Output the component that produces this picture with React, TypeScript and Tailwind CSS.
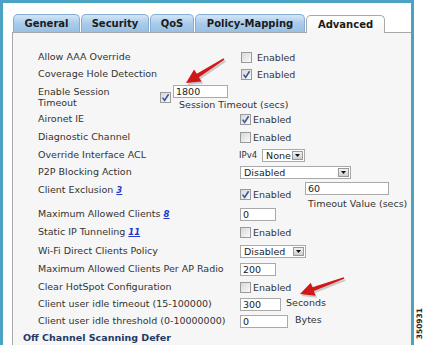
import React from "react";

const font = "font-['DejaVu_Sans',Verdana,sans-serif]";

function Check({ checked }: { checked?: boolean }) {
  return (
    <span className="inline-flex w-[11px] h-[11px] shrink-0 items-center justify-center border border-[#9a9a9a] bg-gradient-to-br from-[#d8d8d8] to-[#fafafa]">
      {checked && (
        <svg width="9" height="9" viewBox="0 0 9 9">
          <path d="M1.6 4.6 L3.6 7.4 L7.6 1.2" fill="none" stroke="#3556a0" strokeWidth="1.6" />
        </svg>
      )}
    </span>
  );
}

function Enabled({ checked, gap = "ml-[2px]" }: { checked?: boolean; gap?: string }) {
  return (
    <span className="flex items-center">
      <Check checked={checked} />
      <span className={`${gap} leading-[11px]`}>Enabled</span>
    </span>
  );
}

function Field({ value, w }: { value: string; w: string }) {
  return (
    <div className={`${w} h-[13px] shrink-0 border border-[#a9a9a9] bg-white pl-[2px] text-[9.5px] leading-[11px] text-[#222]`}>
      {value}
    </div>
  );
}

function Select({ value, w }: { value: string; w: string }) {
  return (
    <div className={`${w} h-[13px] shrink-0 flex items-center justify-between border border-[#a9a9a9] bg-white pl-[3px] pr-[1px] text-[9.5px] leading-[11px] text-[#222]`}>
      <span>{value}</span>
      <span className="flex w-[11px] h-[9px] items-center justify-center border border-[#9a9a9a] bg-gradient-to-b from-[#f2f2f2] to-[#cfcfcf]">
        <svg width="5" height="3" viewBox="0 0 5 3">
          <path d="M0 0 H5 L2.5 3 Z" fill="#111" />
        </svg>
      </span>
    </div>
  );
}

function Ref({ n }: { n: string }) {
  return <span className="ml-[3px] text-[8.5px] font-bold italic underline text-[#2438c8]">{n}</span>;
}

function Row({ label, h, children }: { label: React.ReactNode; h: string; children?: React.ReactNode }) {
  return (
    <div className={`flex items-center ${h}`}>
      <div className="w-[202px] shrink-0">{label}</div>
      <div className="flex items-center">{children}</div>
    </div>
  );
}

function Arrow({ x1, y1, x2, y2 }: { x1: number; y1: number; x2: number; y2: number }) {
  const dx = x2 - x1;
  const dy = y2 - y1;
  const len = Math.hypot(dx, dy);
  const ux = dx / len;
  const uy = dy / len;
  const nx = -uy;
  const ny = ux;
  const head = 14;
  const hw = 7;
  const bx = x2 - ux * head;
  const by = y2 - uy * head;
  const pts = [
    [x1 + nx * 0.8, y1 + ny * 0.8],
    [bx + nx * 2, by + ny * 2],
    [bx + nx * hw, by + ny * hw],
    [x2, y2],
    [bx - nx * hw, by - ny * hw],
    [bx - nx * 2, by - ny * 2],
    [x1 - nx * 0.8, y1 - ny * 0.8],
  ]
    .map((p) => p.join(","))
    .join(" ");
  return (
    <g>
      <polygon points={pts} fill="#000" opacity="0.18" transform="translate(1.5,2)" />
      <polygon points={pts} fill="#d01818" />
    </g>
  );
}

const tabs = ["General", "Security", "QoS", "Policy-Mapping"];
const tabW = ["w-[67px]", "w-[68px]", "w-[44px]", "w-[110px]"];

export default function App() {
  return (
    <div className={`relative w-[428px] h-[345px] overflow-hidden bg-white ${font}`}>
      <div className="w-[414px] h-[348px] border-[3px] border-[#4ba3c3] bg-white pt-[11px] pl-[9px] flex flex-col">
        {/* tabs */}
        <div className="flex items-end pl-[1px] gap-[1px] h-[18px]">
          {tabs.map((t, i) => (
            <div
              key={t}
              className={`${tabW[i]} h-[18px] flex items-center justify-center rounded-t-[5px] border border-b-0 border-[#86add3] bg-gradient-to-b from-[#d3e6f7] via-[#a9cbea] to-[#98c0e4] text-[10px] font-bold text-[#1b1b1b]`}
            >
              {t}
            </div>
          ))}
          <div className="w-[79px] h-[18px] -mb-[1px] z-10 flex items-center justify-center rounded-t-[5px] border border-b-0 border-[#a8a8a8] bg-gradient-to-b from-white to-[#f5f5f5] text-[10px] font-bold text-[#1b1b1b]">
            Advanced
          </div>
        </div>

        {/* panel */}
        <div className="flex-1 border-l border-t border-[#a8a8a8] bg-[#f6f6f6] pl-[25px] pt-[16px] text-[9.5px] text-[#333]">
          <Row label="Allow AAA Override" h="h-[17px]">
            <span className="ml-[1px]"><Enabled gap="ml-[5px]" /></span>
          </Row>
          <Row label="Coverage Hole Detection" h="h-[17px]">
            <span className="ml-[1px]"><Enabled checked gap="ml-[5px]" /></span>
          </Row>

          <div className="flex items-start h-[28px]">
            <div className="w-[122px] shrink-0 pt-[3px] leading-[11px]">
              Enable Session
              <br />
              Timeout
            </div>
            <div className="mt-[9px]"><Check checked /></div>
            <div className="ml-[2px] mt-[2px] flex flex-col">
              <Field value="1800" w="w-[55px]" />
              <span className="pl-[6px] mt-[1px] leading-[11px]">Session Timeout (secs)</span>
            </div>
          </div>

          <Row label="Aironet IE" h="h-[17px]">
            <Enabled checked />
          </Row>
          <Row label="Diagnostic Channel" h="h-[18px]">
            <Enabled />
          </Row>
          <Row label="Override Interface ACL" h="h-[18px]">
            <span className="text-[8.5px] ml-[-1px]">IPv4</span>
            <span className="ml-[5px]"><Select value="None" w="w-[43px]" /></span>
          </Row>
          <Row label="P2P Blocking Action" h="h-[17px]">
            <Select value="Disabled" w="w-[111px]" />
          </Row>

          <div className="flex items-start h-[25px]">
            <div className="w-[202px] shrink-0 leading-[17px]">
              Client Exclusion<Ref n="3" />
            </div>
            <div className="w-[65px] mt-[8px]"><Enabled checked /></div>
            <div className="flex flex-col mt-[1px]">
              <Field value="60" w="w-[84px]" />
              <span className="pl-[3px] mt-[3px] leading-[11px]">Timeout Value (secs)</span>
            </div>
          </div>

          <Row label={<>Maximum Allowed Clients<Ref n="8" /></>} h="h-[17px]">
            <Field value="0" w="w-[36px]" />
          </Row>
          <Row label={<>Static IP Tunneling<Ref n="11" /></>} h="h-[19px]">
            <Enabled />
          </Row>
          <Row label="Wi-Fi Direct Clients Policy" h="h-[19px]">
            <Select value="Disabled" w="w-[66px]" />
          </Row>
          <Row label="Maximum Allowed Clients Per AP Radio" h="h-[17px]">
            <Field value="200" w="w-[36px]" />
          </Row>
          <Row label="Clear HotSpot Configuration" h="h-[18px]">
            <Enabled />
          </Row>
          <Row label="Client user idle timeout (15-100000)" h="h-[17px]">
            <Field value="300" w="w-[41px]" />
            <span className="ml-[5px] -mt-[3px]">Seconds</span>
          </Row>
          <Row label="Client user idle threshold (0-10000000)" h="h-[17px]">
            <Field value="0" w="w-[48px]" />
            <span className="ml-[7px] -mt-[2px]">Bytes</span>
          </Row>
          <div className="-ml-[15px] mt-[1px] text-[9.5px] font-bold text-[#1f3a66] leading-[14px]">
            Off Channel Scanning Defer
          </div>
        </div>
      </div>

      {/* callout arrows */}
      <svg className="absolute left-0 top-0" width="428" height="345">
        <Arrow x1={224} y1={59} x2={186} y2={83} />
        <Arrow x1={344} y1={278} x2={300} y2={294} />
      </svg>

      {/* figure number */}
      <div className="absolute left-[413px] top-[306px] w-[13px] h-[36px] flex items-center justify-center">
        <span className="-rotate-90 text-[7.5px] font-bold text-[#222] whitespace-nowrap">350931</span>
      </div>
    </div>
  );
}
